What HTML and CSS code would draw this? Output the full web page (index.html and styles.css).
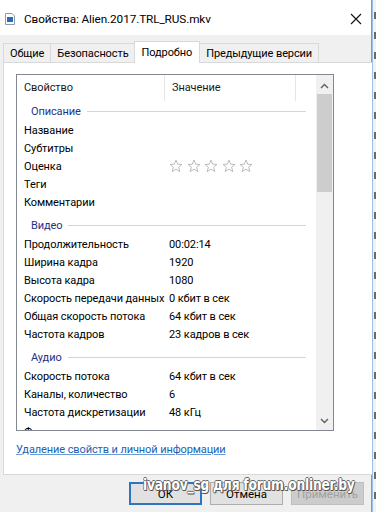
FILE: index.html
```html
<!DOCTYPE html>
<html lang="ru">
<head>
    <meta charset="UTF-8">
    <meta name="viewport" content="width=device-width, initial-scale=1.0">
    <title>Свойства: Alien.2017.TRL_RUS.mkv</title>
    <link rel="stylesheet" href="styles.css">
</head>
<body>
    <div class="screen">
        <div class="window">
            <div class="titlebar">
                <svg class="file-icon" viewBox="0 0 10 12" width="10" height="12">
                    <path d="M0.5 0.5 H7 L9.5 3 V11.5 H0.5 Z" fill="#fff" stroke="#8a9bb0"/>
                    <rect x="2" y="4" width="6" height="5" fill="#2b6cb0"/>
                </svg>
                <span class="title">Свойства: Alien.2017.TRL_RUS.mkv</span>
                <svg class="close" viewBox="0 0 12 12" width="12" height="12">
                    <path d="M1 1 L11 11 M11 1 L1 11" stroke="#111" stroke-width="1.1"/>
                </svg>
            </div>

            <div class="client">
                <div class="tabs">
                    <div class="tab">Общие</div>
                    <div class="tab">Безопасность</div>
                    <div class="tab selected">Подробно</div>
                    <div class="tab">Предыдущие версии</div>
                </div>

                <div class="tab-panel">
                    <div class="listview">
                        <div class="list-main">
                            <div class="list-header">
                                <div class="col-head">Свойство</div>
                                <div class="col-head">Значение</div>
                                <div class="col-head"></div>
                            </div>

                            <div class="group first"><span>Описание</span></div>
                            <div class="row"><span>Название</span><span></span></div>
                            <div class="row"><span>Субтитры</span><span></span></div>
                            <div class="row">
                                <span>Оценка</span>
                                <span class="stars">
                                    <svg viewBox="0 0 14 14" width="14" height="14"><polygon points="7,1 8.7,5.2 13,5.4 9.6,8.2 10.8,12.6 7,10.1 3.2,12.6 4.4,8.2 1,5.4 5.3,5.2"/></svg>
                                    <svg viewBox="0 0 14 14" width="14" height="14"><polygon points="7,1 8.7,5.2 13,5.4 9.6,8.2 10.8,12.6 7,10.1 3.2,12.6 4.4,8.2 1,5.4 5.3,5.2"/></svg>
                                    <svg viewBox="0 0 14 14" width="14" height="14"><polygon points="7,1 8.7,5.2 13,5.4 9.6,8.2 10.8,12.6 7,10.1 3.2,12.6 4.4,8.2 1,5.4 5.3,5.2"/></svg>
                                    <svg viewBox="0 0 14 14" width="14" height="14"><polygon points="7,1 8.7,5.2 13,5.4 9.6,8.2 10.8,12.6 7,10.1 3.2,12.6 4.4,8.2 1,5.4 5.3,5.2"/></svg>
                                    <svg viewBox="0 0 14 14" width="14" height="14"><polygon points="7,1 8.7,5.2 13,5.4 9.6,8.2 10.8,12.6 7,10.1 3.2,12.6 4.4,8.2 1,5.4 5.3,5.2"/></svg>
                                </span>
                            </div>
                            <div class="row"><span>Теги</span><span></span></div>
                            <div class="row"><span>Комментарии</span><span></span></div>

                            <div class="group"><span>Видео</span></div>
                            <div class="row"><span>Продолжительность</span><span>00:02:14</span></div>
                            <div class="row"><span>Ширина кадра</span><span>1920</span></div>
                            <div class="row"><span>Высота кадра</span><span>1080</span></div>
                            <div class="row"><span>Скорость передачи данных</span><span>0 кбит в сек</span></div>
                            <div class="row"><span>Общая скорость потока</span><span>64 кбит в сек</span></div>
                            <div class="row"><span>Частота кадров</span><span>23 кадров в сек</span></div>

                            <div class="group"><span>Аудио</span></div>
                            <div class="row"><span>Скорость потока</span><span>64 кбит в сек</span></div>
                            <div class="row"><span>Каналы, количество</span><span>6</span></div>
                            <div class="row"><span>Частота дискретизации</span><span>48 кГц</span></div>
                            <div class="row last"><span>Формат звука</span><span></span></div>
                        </div>

                        <div class="scrollbar">
                            <svg class="arrow" viewBox="0 0 9 6" width="9" height="6">
                                <path d="M1 5 L4.5 1.5 L8 5" fill="none" stroke="#606060" stroke-width="1.4"/>
                            </svg>
                            <div class="track">
                                <div class="thumb"></div>
                            </div>
                            <svg class="arrow" viewBox="0 0 9 6" width="9" height="6">
                                <path d="M1 1 L4.5 4.5 L8 1" fill="none" stroke="#606060" stroke-width="1.4"/>
                            </svg>
                        </div>
                    </div>

                    <a class="link" href="#">Удаление свойств и личной информации</a>
                </div>

                <div class="buttons">
                    <button class="btn default">ОК</button>
                    <button class="btn">Отмена</button>
                    <button class="btn" disabled>Применить</button>
                </div>
            </div>
        </div>

        <div class="behind"></div>

        <div class="watermark">ivanov_sg для forum.onliner.by</div>
    </div>
</body>
</html>
```

FILE: styles.css
```css
body {
    margin: 0;
    font-family: Roboto, "Noto Sans", sans-serif;
    font-size: 11px;
    letter-spacing: -0.1px;
    color: #000;
    background: #fff;
}

.screen {
    width: 376px;
    height: 512px;
    display: flex;
    overflow: hidden;
    position: relative;
}

.window {
    width: 371px;
    flex: none;
    display: flex;
    flex-direction: column;
    background: #f0f0f0;
    border-right: 1px solid #8e9aa8;
}

/* title bar */
.titlebar {
    flex: none;
    height: 35px;
    background: #fff;
    display: flex;
    align-items: center;
    padding-left: 5px;
}

.file-icon {
    margin-right: 9px;
    margin-top: 3px;
}

.title {
    flex: 1;
    font-size: 11.75px;
    margin-top: 3px;
}

.close {
    margin-right: 9px;
    margin-top: 3px;
}

/* tabs */
.client {
    flex: 1;
    display: flex;
    flex-direction: column;
}

.tabs {
    flex: none;
    display: flex;
    align-items: flex-end;
    height: 20px;
    margin-top: 7px;
    padding-left: 3px;
}

.tab {
    height: 18px;
    line-height: 19px;
    padding: 0 6px;
    border: 1px solid #d9d9d9;
    border-bottom: none;
    margin-right: -1px;
    background: #f0f0f0;
}

.tab.selected {
    height: 21px;
    line-height: 21px;
    margin: 0 -1px -1px -1px;
    padding: 0 7px;
    background: #fff;
    position: relative;
    z-index: 1;
}

.tab-panel {
    flex: none;
    width: 357px;
    height: 400px;
    margin-left: 3px;
    background: #fff;
    border: 1px solid #d9d9d9;
    padding: 11px 0 0 12px;
}

/* list view */
.listview {
    width: 316px;
    height: 355px;
    border: 1px solid #828790;
    display: flex;
    overflow: hidden;
}

.list-main {
    flex: 1;
    overflow: hidden;
}

.list-header {
    display: grid;
    grid-template-columns: 148px 131px 1fr;
    height: 25px;
}

.col-head {
    line-height: 26px;
    padding-left: 7px;
    border-right: 1px solid #e5e5e5;
    color: #1a1a1a;
}

.col-head:last-child {
    border-right: none;
}

.group {
    height: 24px;
    display: flex;
    align-items: center;
    padding: 4px 10px 0 14px;
    box-sizing: border-box;
    color: #1e3287;
}

.group.first {
    height: 21px;
    padding-top: 1px;
}

.group::after {
    content: "";
    flex: 1;
    height: 1px;
    margin-left: 6px;
    background: #ccd6e4;
}

.row {
    display: grid;
    grid-template-columns: 148px 1fr;
    height: 18px;
    line-height: 19px;
    white-space: nowrap;
}

.row.last {
    line-height: 23px;
}

.row span:first-child {
    padding-left: 7px;
    overflow: hidden;
}

.row span:last-child {
    padding-left: 4px;
}

.stars {
    display: flex;
    align-items: center;
    gap: 3.5px;
    height: 18px;
    padding-left: 7px;
}

.stars polygon {
    fill: #fff;
    stroke: #b4b4b4;
    stroke-width: 0.9;
}

/* scrollbar */
.scrollbar {
    width: 17px;
    background: #f0f0f0;
    display: flex;
    flex-direction: column;
    align-items: center;
}

.scrollbar .arrow {
    margin: 8px 0 5px;
}

.scrollbar .arrow:last-child {
    margin: 6px 0 6px;
}

.track {
    flex: 1;
    width: 15px;
}

.thumb {
    height: 98px;
    background: #cdcdcd;
}

.link {
    display: inline-block;
    margin-top: 12px;
    font-size: 11px;
    color: #1a62b3;
    text-decoration: underline;
    text-decoration-color: #6b9bd2;
}

/* buttons */
.buttons {
    flex: none;
    display: flex;
    justify-content: flex-end;
    gap: 8px;
    padding: 7px 7px 0 0;
}

.btn {
    width: 73px;
    height: 23px;
    font-family: inherit;
    font-size: 11.5px;
    background: #e1e1e1;
    border: 1px solid #adadad;
    color: #000;
    padding: 0;
}

.btn.default {
    border: 2px solid #2f75be;
}

.btn:disabled {
    background: #cccccc;
    border-color: #bfbfbf;
    color: #a0a0a0;
}

/* window behind */
.behind {
    flex: 1;
    border-left: 1px solid #9cc0e4;
    background:
        repeating-linear-gradient(to bottom, transparent 0 12px, #6a6a6a 12px 19px, transparent 19px 20px) 1px 0 / 2px 100% no-repeat,
        #eef3f8;
}

.watermark {
    position: absolute;
    left: 143px;
    top: 475px;
    font-family: "DejaVu Sans", sans-serif;
    font-weight: bold;
    font-size: 16px;
    letter-spacing: -0.3px;
    color: #fff;
    text-shadow: 1px 1px 0 #555, -1px 0 0 #666, 0 -1px 0 #666, 1px 0 0 #666, 0 1px 0 #666;
    white-space: nowrap;
    transform: scaleX(0.77);
    transform-origin: left center;
}
```
